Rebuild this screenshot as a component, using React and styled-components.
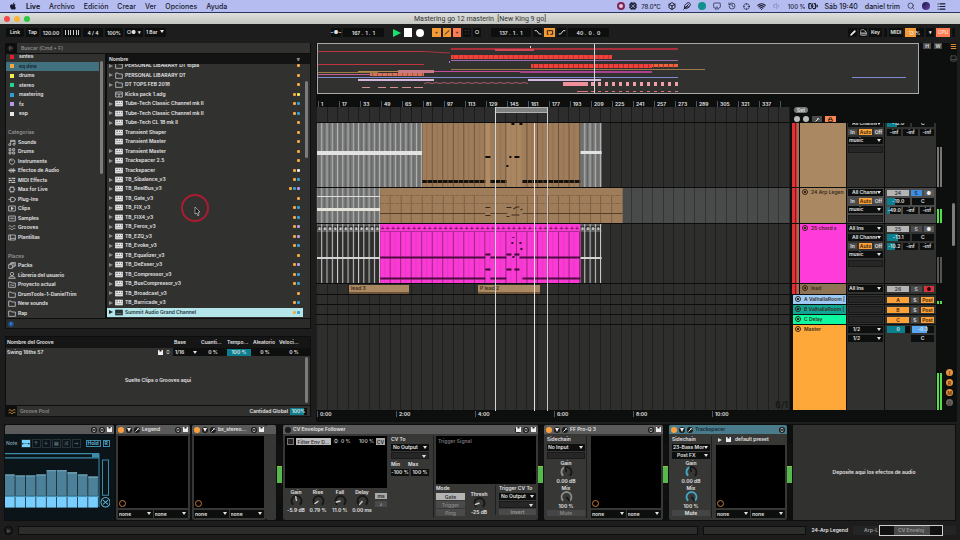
import React from 'react';
import styled, { createGlobalStyle, css } from 'styled-components';
import { FaApple } from 'react-icons/fa';
import {
  Wifi, Volume1, Search, Airplay, History, Box as Cube, List, Menu, Pencil, Piano, Lock,
  BatteryCharging, Cpu, Crosshair, Feather, PanelBottom,
} from 'lucide-react';

const c = {
  app: '#1d1d1d', black: '#0d0e0e', panel: '#313130', mid: '#3b3b3a', text: '#e4e4e4',
  orange: '#ffa13a', tan: '#a98862', magenta: '#ff3bd9', teal: '#0c7f8f', cyan: '#76d4ff',
};

const Global = createGlobalStyle`
  *, *::before, *::after { box-sizing: border-box; }
  body { margin: 0; background: ${c.app}; }
  body, button, input, select { font: 600 5px/7px Inter, "Liberation Sans", sans-serif; color: ${c.text}; }
  button, input, select { border: 0; border-radius: 0; padding: 0; margin: 0; min-width: 0; background: none; appearance: none; outline: 0; }
  ul { list-style: none; margin: 0; padding: 0; }
  svg { display: block; flex: none; }
`;

/* ---------- shell ---------- */
const App_ = styled.div`
  display: flex; flex-direction: column; height: 100vh; overflow: hidden; background: ${c.app};
`;
const MenuBar = styled.header`
  display: flex; align-items: center; justify-content: space-between; height: 13px; flex: none; padding: 0 14px 0 9px;
  background: #b5bdf0; border-bottom: 1px solid #27345f; color: #17192e;
`;
const MenuGroup = styled.nav`display: flex; align-items: center; gap: ${p => p.$gap}px;`;
const MenuItem = styled.button`
  font: ${p => (p.$bold ? 700 : 500)} ${p => (p.$small ? 6 : 7)}px/11px Inter, sans-serif; color: #17192e; white-space: nowrap;
`;
const Disc = styled.span`width: 8px; height: 8px; border-radius: 50%; background: ${p => p.$bg}; border: ${p => p.$ring || '0'};`;
const TitleBar = styled.div`
  display: grid; grid-template-columns: 1fr auto 1fr; align-items: center; height: 11px; flex: none; padding: 0 4px;
  background: linear-gradient(#dedfdc, #c4c6c2);
`;
const Title = styled.h1`margin: 0; font: 400 7px/10px Roboto, sans-serif; color: #333; white-space: pre;`;
const Lights = styled.div`display: flex; gap: 4px;`;
const Light = styled.button`width: 6px; height: 6px; border-radius: 50%; background: ${p => p.$bg};`;

/* ---------- transport ---------- */
const Transport = styled.div`
  display: grid; grid-template-columns: 326px 1fr auto; align-items: center; height: 19px; flex: none; padding: 0 5px 2px;
`;
const TGroup = styled.div`display: flex; align-items: center; gap: 2px; padding-left: ${p => p.$pad || 0}px;`;
const TBox = styled.button`
  display: flex; align-items: center; justify-content: center; height: 9px; width: ${p => p.$w}px;
  background: ${p => p.$bg || c.black}; color: ${p => p.$fg || c.text}; white-space: pre;
`;
const Field = styled.input`
  height: ${p => p.$h || 7}px; width: ${p => (p.$w ? p.$w + 'px' : '100%')}; text-align: center; line-height: 7px;
  background: ${p => (p.$fill ? `linear-gradient(90deg, ${p.$tone || c.teal} ${p.$fill}%, ${c.black} ${p.$fill}%)` : p.$bg || c.black)};
  color: ${p => p.$fg || c.text};
`;

/* ---------- drop-down ---------- */
const Drop = styled.span`
  display: flex; align-items: center; position: relative; height: ${p => p.$h || 7}px; width: ${p => (p.$w ? p.$w + 'px' : '100%')};
  background: ${p => (p.$empty ? '#262626' : c.black)}; border: ${p => (p.$empty ? '1px solid #1a1a1a' : '0')};
  &::after {
    content: ''; position: absolute; right: 2px; top: 2px; border: 2px solid transparent; border-top: 3px solid ${c.text}; border-bottom: 0;
    display: ${p => (p.$bare ? 'none' : 'block')};
  }
  select { width: 100%; height: 100%; padding: 0 6px 0 ${p => p.$pad || 1}px; line-height: 7px; }
`;
function Select({ value = '', label, ...rest }) {
  return <Drop {...rest}><select aria-label={label || value || 'Opciones'}><option>{value}</option></select></Drop>;
}

/* ---------- browser ---------- */
const Main = styled.main`display: flex; flex: 1; min-height: 0;`;
const Left = styled.aside`display: flex; flex-direction: column; gap: 7px; width: 311px; padding-left: 5px; flex: none;`;
const Browser = styled.section`
  position: relative; display: flex; flex-direction: column; height: 286px; background: ${c.black}; padding: 0 1px 1px;
`;
const SearchRow = styled.div`display: flex; gap: 2px; height: 10px; align-items: center; margin-bottom: 1px; flex: none;`;
const PlayDot = styled.button`
  width: 9px; height: 9px; border-radius: 50%; background: #1d1d1d; border: 1px solid #050505; display: grid; place-items: center;
`;
const SearchInput = styled.input`
  flex: 1; height: 10px; background: ${c.panel}; padding-left: 4px;
  &::placeholder { color: #8c8c8c; opacity: 1; }
`;
const BrowserBody = styled.div`display: flex; gap: 2px; flex: 1; min-height: 0;`;
const Side = styled.div`width: 99px; background: ${c.panel}; overflow: hidden; position: relative;`;
const SideList = styled.ul`display: grid; grid-auto-rows: 1fr; height: 266px; margin-top: -2px; width: 93px;`;
const SideItem = styled.li`
  display: flex; background: ${p => (p.$on ? '#41717f' : 'none')};
  button { display: flex; align-items: center; gap: 2px; padding-left: 2px; width: 100%; color: ${p => (p.$on ? '#10242c' : p.$head ? '#969696' : c.text)}; white-space: nowrap; }
`;
const Swatch = styled.span`width: 4px; height: 4px; margin: 0 3px 0 2px; background: ${p => p.$bg};`;
const Thumb = styled.span`
  position: absolute; right: 2px; top: ${p => p.$top}px; height: ${p => p.$h}px; width: 3px; background: #7c7c7c; border-radius: 2px;
`;
const Files = styled.div`flex: 1; display: flex; flex-direction: column; background: ${c.panel}; position: relative; min-width: 0;`;
const FilesHead = styled.div`
  display: flex; justify-content: space-between; align-items: center; height: 10px; flex: none; z-index: 1;
  background: #131313; padding: 0 10px 0 2px; position: relative;
`;
const FileList = styled.ul`display: grid; grid-auto-rows: 1fr; height: 256px; margin-top: -3px; padding-right: 7px;`;
const FileItem = styled.li`
  background: ${p => (p.$on ? '#b3e5e9' : 'none')}; display: flex;
  button { display: flex; align-items: center; width: 100%; padding: 0 3px 0 2px; gap: 2px; color: ${p => (p.$on ? '#243438' : c.text)}; white-space: nowrap; }
`;
const Name = styled.span`flex: 1; text-align: left; white-space: nowrap;`;
const Dot = styled.span`width: 3px; height: 3px; border-radius: 1px; background: ${p => p.$bg};`;
const Dots = styled.span`display: flex; gap: 1px;`;
const BrowserFoot = styled.div`height: 9px; margin-top: 1px; flex: none; background: #2b2b2a; display: flex; align-items: center; padding-left: 2px;`;
const Pointer = styled.div`position: absolute; left: 176px; top: 151px; pointer-events: none;`;

/* ---------- groove pool ---------- */
const Groove = styled.section`height: 81px; background: ${c.panel}; border: 1px solid ${c.black}; display: flex; flex-direction: column;`;
const GrooveTable = styled.table`
  width: 100%; border-collapse: collapse; table-layout: fixed; background: #262626;
  th { font-weight: 600; text-align: left; height: 11px; padding: 0 0 0 1px; background: #151515; white-space: nowrap; }
  td { height: 8px; padding: 0 1px; background: ${c.black}; text-align: center; }
  td:first-child { background: ${c.panel}; }
`;
const GrooveName = styled.div`display: flex; align-items: center; gap: 3px; padding-right: 2px;`;
const GrooveDrop = styled.div`flex: 1; display: grid; place-items: center; position: relative;`;
const GrooveFoot = styled.div`
  height: 11px; border-top: 1px solid ${c.black}; display: flex; align-items: center; gap: 2px; padding-right: 3px; 
  h2 { flex: 1; margin: 0; font: inherit; color: #8c8c8c; }
`;
const GrooveTab = styled.button`width: 11px; height: 10px; background: ${c.black}; display: grid; place-items: center; margin-right: 1px;`;

/* ---------- arrangement ---------- */
const Arrange = styled.section`
  flex: 1; min-width: 0; margin: 0 3px 0 5px; background: ${c.black}; display: flex; flex-direction: column; position: relative;
`;
const OverviewRow = styled.div`display: flex; gap: 4px; height: 51px; padding-left: 1px; flex: none;`;
const Overview = styled.div`flex: 1; border: 1px solid #a9a9a9; background: ${c.panel}; svg { width: 100%; height: 100%; }`;
const TopTools = styled.div`display: flex; gap: 3px; width: 34px; align-items: flex-start;`;
const ViewToggles = styled.div`display: grid; gap: 5px; margin-left: auto;`;
const Mini = styled.button`
  height: ${p => p.$h || 6}px; width: ${p => (p.$w ? p.$w + 'px' : 'auto')}; flex: ${p => (p.$w ? 'none' : 1)}; border-radius: ${p => p.$r || 0}px;
  background: ${p => p.$bg || '#4a4a4a'}; color: ${p => p.$fg || c.text}; display: flex; align-items: center; justify-content: center;
  white-space: nowrap; line-height: 6px; border: ${p => p.$line || '0'};
`;
const Body = styled.div`display: flex; flex: 1; min-height: 0;`;
const Timeline = styled.div`flex: 1; min-width: 0; display: flex; flex-direction: column; position: relative;`;
const Ruler = styled.div`
  display: flex; height: ${p => p.$h}px; padding-left: ${p => p.$pad}px; overflow: hidden; align-items: ${p => p.$at || 'flex-end'}; flex: none;
  span { border-left: 1px solid #555; padding-left: 2px; height: 6px; line-height: 6px; white-space: nowrap; flex: 0 0 ${p => p.$step}px; }
`;
const grid = (a, b) => css`
  background: repeating-linear-gradient(90deg, ${a} 0 1px, ${b} 1px 11px, ${a} 11px 12px, ${b} 12px 21px);
`;
const Scrub = styled.div`height: 14px; flex: none; ${grid('#1c1c1c', '#2c2d2c')} position: relative;`;
const Loop = styled.div`
  position: absolute; left: 179px; width: 53px; top: 0; height: 6px; background: #7f8080; border: 1px solid #b0b0b0;
`;
const Lane = styled.div`
  height: ${p => (p.$h ? p.$h + 'px' : 'auto')}; flex: ${p => (p.$h ? 'none' : 1)}; border-bottom: 1px solid #0c0c0c; position: relative;
  ${p => (p.$on ? grid('#343434', '#494a4a') : grid('#1f1f1f', '#2e2f2d'))}
  svg { width: 100%; height: 100%; }
`;
const Clip = styled.div`
  position: absolute; top: 1px; bottom: 0; left: ${p => p.$l}px; width: ${p => p.$w}px; background: ${c.tan}; color: #3d2d1b;
  padding-left: 2px; border-bottom: 2px solid #6e5538;
`;
const Line = styled.i`position: absolute; left: ${p => p.$l}px; top: ${p => p.$t || 0}px; bottom: ${p => p.$b || 0}px; width: 1px; background: ${p => p.$c};`;
const Zoom = styled.span`position: absolute; right: 2px; bottom: 0; font-size: 9px; line-height: 10px; font-weight: 500; color: #131313;`;
const Controls = styled.div`width: 152px; flex: none; padding: 0 0 11px 2px; display: flex; flex-direction: column;`;
const SetBox = styled.div`height: 29px; padding: 13px 0 0 2px; display: grid; grid-template-rows: 6px 6px; gap: 3px; flex: none;`;
const SetRow = styled.div`display: flex; gap: 3px; align-items: center;`;
const TrackRow = styled.div`
  display: flex; height: ${p => (p.$h ? p.$h + 'px' : 'auto')}; flex: ${p => (p.$h ? 'none' : 1)}; border-bottom: 1px solid ${c.black}; overflow: hidden;
  background: ${p => (p.$on ? '#4a4a4a' : c.panel)};
`;
const GroupBar = styled.div`width: 7px; flex: none; background: linear-gradient(90deg, #e03036 0 3px, #8e1418 3px 4px, #e03036 4px 5px, #97705a 5px);`;
const Head = styled.div`
  flex: 1; min-width: 0; display: flex; gap: 3px; padding: 1px 0 0 2px; background: ${p => p.$bg}; color: #3a2b1c; white-space: nowrap; overflow: hidden;
  border-left: 1px solid ${c.black};
`;
const Fold = styled.button`width: 6px; height: 6px; border-radius: 50%; border: 1px solid #33261a; display: grid; place-items: center; flex: none;
  &::after { content: ''; width: 2px; height: 2px; background: #33261a; }
`;
const IO = styled.div`
  width: 38px; flex: none; padding: 1px 1px 0; border-left: 1px solid ${c.black}; display: grid; align-content: start; gap: 2px;
  margin-top: ${p => -(p.$up || 0)}px;
`;
const Mix = styled(IO)`width: 52px; padding: 1px 2px 0; grid-auto-rows: 7px;`;
const MixRow = styled.div`display: flex; gap: 2px; align-items: center;`;
const Meter = styled.div`
  width: 6px; flex: none; border-left: 1px solid ${c.black}; position: relative;
  background: linear-gradient(0deg, ${p => p.$tone || '#55e04a'} ${p => p.$v || 0}px, #0d0e0e ${p => p.$v || 0}px);
  &::after { content: ''; position: absolute; left: 2px; top: 0; bottom: 0; width: 1px; background: ${c.black}; }
`;
const RightRail = styled.div`width: 15px; flex: none; position: relative; display: flex; flex-direction: column; justify-content: flex-end; align-items: center; gap: 3px; padding-bottom: 16px;`;
const RailDot = styled.button`width: 7px; height: 7px; border-radius: 50%; background: ${p => p.$bg}; color: #573611; line-height: 6px; text-align: center;`;

/* ---------- devices ---------- */
const Devices = styled.section`
  display: flex; height: 97px; flex: none; margin: 2px 4px 0; padding: 1px; background: ${c.black}; 
`;
const Device = styled.article`
  width: ${p => p.$w}px; margin-right: ${p => p.$gap || 0}px; flex: none; display: flex; flex-direction: column; background: #373736; border-radius: 2px; overflow: hidden;
`;
const DeviceHead = styled.header`
  height: 9px; display: flex; align-items: center; gap: 2px; padding: 0 2px; background: ${p => (p.$on ? '#497b8b' : '#5a5a5a')}; color: ${p => (p.$on ? '#112a33' : c.text)};
  h3 { font: inherit; margin: 0; flex: 1; white-space: nowrap; }
`;
const Round = styled.button`width: 6px; height: 6px; border-radius: 50%; background: ${p => p.$bg || '#1b1b1b'}; display: grid; place-items: center; flex: none;`;
const DeviceBody = styled.div`flex: 1; display: flex; min-height: 0; padding: 2px;`;
const Pad = styled.div`flex: 1; background: #000; display: flex; align-items: flex-end; padding: 1px;`;
const Ring = styled.span`width: 7px; height: 7px; border-radius: 50%; border: 1px solid #c97a38;`;
const Column = styled.div`
  display: flex; flex-direction: column; gap: ${p => (p.$gap ?? 1)}px; width: ${p => (p.$w ? p.$w + 'px' : 'auto')}; flex: ${p => (p.$w ? 'none' : 1)}; min-width: 0;
  padding: ${p => p.$p || '0'}; border-left: ${p => (p.$rule ? '1px solid #1f1f1f' : '0')};
`;
const Row = styled.div`display: flex; gap: ${p => (p.$gap ?? 1)}px; align-items: ${p => p.$a || 'center'}; justify-content: ${p => p.$j || 'flex-start'}; padding: ${p => p.$p || '0'};`;
const KnobLabel = styled.label`
  display: flex; flex-direction: column; align-items: center; position: relative; width: ${p => p.$w || 22}px; line-height: 6px; white-space: nowrap;
  input { position: absolute; inset: 6px 0; width: 100%; opacity: 0; }
`;
const Display = styled.div`background: #000; height: ${p => p.$h}px; padding: 2px; color: ${p => p.$fg || '#bbb'}; display: flex; align-items: flex-start; gap: 2px; flex: none; white-space: nowrap;`;
const Spacer = styled.span`flex: 1;`;
const LevelBar = styled.div`
  width: 5px; margin: 0 1px 0 0; flex: none; align-self: center; height: 57px; background: linear-gradient(0deg, #101010 18px, #56b94c 18px 34px, #8fbf4a 34px 35px, #101010 35px);
`;
const ArpPanel = styled.div`flex: 1; background: #0a1419; padding: 5px 4px 6px 0; display: flex; flex-direction: column; gap: 4px; color: #7d9aa6; svg { width: 100%; flex: 1; }`;
const ArpButton = styled.button`height: ${p => p.$h || 9}px; width: ${p => p.$w}px; background: ${p => (p.$on ? c.cyan : 'none')}; border: 1px solid ${p => (p.$hi ? '#3e8aa9' : '#263439')};
  color: ${p => (p.$on ? '#0a1419' : p.$hi ? '#6cc0e0' : '#5d6f77')}; line-height: 5px;`;
const DropZone = styled.div`flex: 1; background: #313130; display: grid; place-items: center; text-align: center;`;

const Status = styled.footer`display: flex; align-items: center; gap: 5px; height: 19px; flex: none; padding: 0 4px; white-space: nowrap;`;
const StatusBar = styled.div`flex: ${p => p.$f}; height: 9px; background: #2d2d2c; border: 1px solid #0d0d0d;`;
const MiniMap = styled.div`width: 103px; height: 9px; background: #242424; display: flex; align-items: center; justify-content: flex-end; gap: 1px; color: #999; flex: none;`;
const MapView = styled.div`width: 64px; height: 11px; border: 1px solid #d0d0d0; display: grid; place-items: center; margin-right: 13px; flex: none; background: linear-gradient(90deg, #111 14px, #4a4a4a 14px 50px, #111 50px);`;

/* ---------- icons ---------- */
const Svg = ({ w = 8, h = 7, v = '0 0 24 21', children, color = 'currentColor', sw = 2 }) => (
  <svg width={w} height={h} viewBox={v} fill="none" stroke={color} strokeWidth={sw} aria-hidden="true">{children}</svg>
);
const paths = {
  sounds: <><path d="M8 17V4h13v11M8 7h13" /><circle cx="5" cy="17" r="3" /><circle cx="18" cy="16" r="3" /></>,
  drums: <><path d="M3 2h6v6H3zM14 2h6v6h-6zM3 12h6v6H3zM14 12h6v6h-6z" /></>,
  instruments: <path d="M8 4a8 8 0 1 0 8 0M12 1v9M6 2v4h4" />,
  audio: <path d="M1 10h22M5 7v7M9 3v15M13 6v9M17 3v14M20 8v5" />,
  midi: <path d="M2 4h6M11 4h11M2 10h11M16 10h5M2 16h5M10 16h12" strokeWidth="3" />,
  max: <path d="M6 4h12v13H6zM2 10h4M18 10h4M9 1v3M15 1v3M9 17v3M15 17v3" />,
  plug: <path d="M8 4h7a6 6 0 0 1 0 13H8zM1 10h7M21 10h3" />,
  clips: <><path d="M2 3h20v15H2z" /><path d="M10 7l6 3-6 4z" fill="currentColor" /></>,
  samples: <path d="M2 3h20v15H2zM5 10h2M9 7v6M12 9v3M15 7v6M18 10h2" />,
  grooves: <path d="M2 7c5-6 8 5 12 1s5-3 8-2M2 15c5-6 8 5 12 1s5-3 8-2" />,
  templates: <path d="M2 3h20v15H2zM7 3v15M7 13h15" />,
  packs: <path d="M2 8h11v11H2zM6 8V4h12v11h-5M10 4V1h12v11h-4" />,
  user: <><circle cx="12" cy="6" r="5" /><path d="M2 19c0-7 20-7 20 0z" /></>,
  project: <path d="M2 19V3h7l2 3h11v13zM6 13c4-5 6 4 12-1" />,
  folder: <path d="M2 19V3h7l2 3h11v13z" />,
  device: <><path d="M1 3h22v15H1z" fill="currentColor" /><path d="M4 7h5M12 7h3M18 7h3" stroke="#333" /><path d="M4 14h16" stroke="#888" /></>,
  pack: <path d="M2 3h20v15H2zM2 9h20M12 9v9" />,
};
const Ico = ({ n }) => <Svg>{paths[n]}</Svg>;
const Tri = ({ color = '#8d8d8d', s = 4 }) => <svg width={s} height={s} viewBox="0 0 4 4" aria-hidden="true"><path d="M0 0l4 2-4 2z" fill={color} /></svg>;
const Down = () => <svg width="4" height="4" viewBox="0 0 4 4" aria-hidden="true"><path d="M0 0h4L2 4z" fill="#eee" /></svg>;
const Save = ({ color = '#eee' }) => <svg width="5" height="5" viewBox="0 0 10 10" aria-hidden="true"><path d="M0 0h10v10H0z" fill={color} /><path d="M3 0h4v3H3z" fill="#222" /></svg>;
const Swap = () => <svg width="4" height="4" viewBox="0 0 10 10" fill="none" stroke="#ddd" strokeWidth="2" aria-hidden="true"><path d="M2 6a3 3 0 0 0 6 0M8 4a3 3 0 0 0-6 0" /></svg>;
const Wrench = () => <svg width="5" height="5" viewBox="0 0 10 10" fill="none" stroke="#eee" strokeWidth="2" aria-hidden="true"><path d="M1 9l6-6M5 2l3 3" /></svg>;

/* ---------- data ---------- */
const O = '#f5a742', B = '#2f9fd8', V = '#b59ae8', Y = '#f2ea5c', W = '#e8e8e8';
const side = [
  { t: 'sintes', s: '#e0202f' }, { t: 'eq dina', s: '#f5a742', on: true }, { t: 'drums', s: '#f7ee57' }, { t: 'stereo', s: '#21d68c' },
  { t: 'mastering', s: B }, { t: 'fx', s: V }, { t: 'esp', s: W }, null, { t: 'Categorías', head: true },
  { t: 'Sounds', i: 'sounds' }, { t: 'Drums', i: 'drums' }, { t: 'Instruments', i: 'instruments' }, { t: 'Efectos de Audio', i: 'audio' },
  { t: 'MIDI Effects', i: 'midi' }, { t: 'Max for Live', i: 'max' }, { t: 'Plug-Ins', i: 'plug' }, { t: 'Clips', i: 'clips' },
  { t: 'Samples', i: 'samples' }, { t: 'Grooves', i: 'grooves' }, { t: 'Plantillas', i: 'templates' }, null, { t: 'Places', head: true },
  { t: 'Packs', i: 'packs' }, { t: 'Librería del usuario', i: 'user' }, { t: 'Proyecto actual', i: 'project' },
  { t: 'DrumTools-1-DanielTrim', i: 'folder' }, { t: 'New sounds', i: 'folder' }, { t: 'Rap', i: 'folder' },
];
const files = [
  ['PERSONAL LIBARARY DT topia', [O], 'folder', 1], ['PERSONAL LIBARARY DT', [O], 'folder', 1], ['DT TOPS FEB 2018', [O], 'folder', 1],
  ['Kicks pack 1.adg', [O, Y], 'pack', 0], ['Tube-Tech Classic Channel mk II', [O, B], 'device', 1], ['Tube-Tech Classic Channel mk II', [O, B], 'device', 1],
  ['Tube-Tech CL 1B mk II', [O], 'device', 1], ['Transient Shaper', [O], 'device', 0], ['Transient Master', [O], 'device', 0],
  ['Transient Master', [O], 'device', 1], ['Trackspacer 2.5', [O], 'device', 1], ['Trackspacer', [O, W], 'device', 0],
  ['TB_Sibalance_v3', [O, B], 'device', 1], ['TB_ReelBus_v3', [O, B, V], 'device', 1], ['TB_Gate_v3', [O], 'device', 1], ['TB_FIX_v3', [O, B], 'device', 1],
  ['TB_FIX4_v3', [O, B], 'device', 1], ['TB_Ferox_v3', [O, V], 'device', 1], ['TB_EZQ_v3', [O, V], 'device', 1], ['TB_Evoke_v3', [O, B], 'device', 1],
  ['TB_Equalizer_v3', [O], 'device', 1], ['TB_DeEsser_v3', [O, V], 'device', 1], ['TB_Compressor_v3', [O, B], 'device', 1],
  ['TB_BusCompressor_v3', [O, B], 'device', 1], ['TB_Broadcast_v3', [O], 'device', 1], ['TB_Barricade_v3', [O, B], 'device', 1],
  ['Summit Audio Grand Channel', [O, B], 'device', 1],
];
const range = n => Array.from({ length: n }, (_, i) => i);

/* ---------- drawings ---------- */
function OverviewMap() {
  const R = (x, y, w, h, f, o) => <rect key={`${x}-${y}-${w}`} x={x - 318} y={y - 44} width={w} height={h} fill={f} opacity={o} />;
  return (
    <svg viewBox="0 0 600 49" preserveAspectRatio="none" aria-label="Vista general">
      {R(318, 51, 106, 1, '#b83440')}
      <path d="M106 7.5l26 1.5" stroke="#a83440" fill="none" />
      {R(451, 48, 227, 2, '#a92f3c')}{R(495, 49, 39, 2, '#d04a55')}
      {R(451, 55, 161, 4, '#f0403a')}{R(451, 60, 227, 1, '#9a6bb0')}
      {range(32).map(i => R(453 + i * 5, 55, 1, 4, '#c83230'))}
      {R(318, 64, 106, 1, '#c0343f')}{R(531, 64, 121, 4, '#f0403a')}{R(652, 64, 26, 3, '#e8663a')}
      {range(29).map(i => R(533 + i * 5, 64, 1, 4, '#a82f2c'))}
      {R(451, 69, 254, 1, '#9a7a4c')}{R(398, 70, 36, 3, '#c77a86')}{R(434, 71, 218, 1, '#c84a9e')}
      {R(318, 72, 60, 1, '#9a8040')}{R(318, 74, 52, 1, '#c85a9a')}{R(358, 71, 42, 1, '#b08a50')}{R(370, 73, 54, 3, '#d8705a')}
      {range(11).map(i => R(372 + i * 5, 73, 1, 3, '#8e5a4a'))}
      {R(520, 71, 132, 2, '#a8428e')}{R(318, 77, 360, 1, '#7f8ad0')}{R(852, 77, 54, 1, '#7f8ad0')}
      {R(358, 79, 76, 2, '#d5b8e0')}{R(528, 79, 73, 2, '#d5b8e0')}
      <path d={'M106 39.5' + range(26).map(i => `l4 ${i % 2 ? 1 : -1}`).join('')} stroke="#a85a68" fill="none" />
      {R(563, 82, 25, 4, '#f0909c')}{range(13).map(i => R(591 + i * 7, 82, 3, 4, '#f0a0a8'))}
      {[[362, 8], [378, 8], [390, 8], [402, 9], [414, 9]].map(([x, w]) => R(x, 87, w, 1, '#d89098'))}
      {R(577, 91, 11, 1, '#e07080')}{range(13).map(i => R(591 + i * 7, 91, 3, 1, '#e07080'))}
      {R(530, 46, 1, 2, '#cfe3e6')}{R(449, 61, 1, 2, '#c070d0')}
      {R(594, 44, 1, 49, '#d8d8d8')}
    </svg>
  );
}
const V0 = 317;
const Rect = ({ x, y, w, h, f, o }) => <rect x={x - V0} y={y} width={w} height={h} fill={f} opacity={o} />;
function Defs({ id }) {
  return (
    <defs>
      <pattern id={`${id}g`} width="5.25" height="70" patternUnits="userSpaceOnUse"><rect width="5.25" height="70" fill="#777878" /><path d="M.5 0v70" stroke="#b4b4b4" /><path d="M3 0v70" stroke="#646464" /></pattern>
      <pattern id={`${id}t`} width="10.5" height="70" patternUnits="userSpaceOnUse"><rect width="10.5" height="70" fill="#a07d5a" /><path d="M.5 0v70" stroke="#6b543b" /><path d="M5.5 0v70" stroke="#8f6f4f" /></pattern>
      <pattern id={`${id}m`} width="10.5" height="70" patternUnits="userSpaceOnUse"><rect width="10.5" height="70" fill="#fb3ad5" /><path d="M.5 7v63" stroke="#96247f" /><path d="M5.5 7v63" stroke="#e636c3" /><path d="M0 7.5h10.5" stroke="#b02a95" /><path d="M2 4.5h3M3.5 2.5v3M7 4.5h3M8.5 2.5v3" stroke="#7a1c68" /></pattern>
      <pattern id={`${id}w`} width="5.25" height="70" patternUnits="userSpaceOnUse"><path d="M.5 0v70" stroke="#cfcfcf" /><path d="M0 1h5.25M0 7h5.25" stroke="#bbb" strokeWidth=".6" /><path d="M2 5h3M3.5 3v3" stroke="#eee" /></pattern>
    </defs>
  );
}
function LaneA() {
  return (
    <svg viewBox="0 0 473 64" preserveAspectRatio="none" aria-hidden="true"><Defs id="a" />
      <Rect x={318} y={0} w={105} h={64} f="url(#ag)" /><Rect x={318} y={28} w={105} h={4} f="#e2e2e2" />
      <Rect x={423} y={0} w={158} h={64} f="url(#at)" /><Rect x={486} y={0} w={5} h={64} f="#b08c66" /><Rect x={507} y={0} w={16} h={64} f="#b08c66" o=".6" />
      <path d="M106 58.5h63M174 58.5h16M206 58.5h58" stroke="#17110b" strokeWidth="3" strokeDasharray="4.6 .6" />
      {[[486, 33, 5], [510, 33, 2], [515, 33, 5], [507, 42, 2], [512, 0, 3], [520, 0, 3]].map(([x, y, w]) => <Rect key={x + '-' + y} x={x} y={y} w={w} h={2} f="#100c08" />)}
      <Rect x={581} y={0} w={21} h={64} f="url(#ag)" /><Rect x={581} y={28} w={21} h={3} f="#e2e2e2" />
    </svg>
  );
}
function LaneB() {
  return (
    <svg viewBox="0 0 473 35" preserveAspectRatio="none" aria-hidden="true"><Defs id="b" />
      <Rect x={318} y={0} w={63} h={35} f="url(#bg)" /><Rect x={318} y={8} w={63} h={1} f="#ddd" /><Rect x={318} y={20} w={63} h={3} f="#e6e3dc" />
      <Rect x={381} y={0} w={242} h={35} f="#a07d5a" />
      <path d="M74 7v28M85 7v28M95 7v28M106 7v28M116 7v28M127 7v28M137 7v28M148 7v28M158 7v28M200 7v28M211 7v28M221 7v28M232 7v28M242 7v28M253 7v28M263 7v28M274 7v28M284 7v28M295 7v28" stroke="#7d6144" />
      <path d="M64 7.5h242M64 15.5h242" stroke="#866748" strokeDasharray="4 1" /><path d="M64 25.5h105M174 25.5h17M206 25.5h100" stroke="#553f29" />
      <path d="M169 19.5h5M169 27.5h5M190 19.5h5M197 21l3-2h3M190 28.5h3M195 27h8M204 22l2-1" stroke="#3a2a1a" fill="none" />
    </svg>
  );
}
function LaneC() {
  return (
    <svg viewBox="0 0 473 59" preserveAspectRatio="none" aria-hidden="true"><Defs id="c" />
      <Rect x={318} y={0} w={63} h={59} f="url(#cw)" /><Rect x={318} y={33} w={63} h={2} f="#d4d4d4" />
      <Rect x={381} y={0} w={200} h={59} f="url(#cm)" />
      <path d="M64 33.5h105M174 33.5h16M203 33.5h61M64 54.5h105M174 54.5h16M206 54.5h58" stroke="#4d0d40" strokeWidth="2" />
      <path d="M169 30.5h5M190 30.5h5M198 30.5h5M169 45.5h5M190 45.5h5M198 45.5h5" stroke="#3a0a30" strokeWidth="2" />
      <path d="M197 13v1M196 18v2M204 18v2M205 24v2M197 32v2" stroke="#3a0a30" strokeWidth="2" />
      <Rect x={581} y={0} w={21} h={59} f="url(#cw)" /><Rect x={581} y={33} w={21} h={2} f="#d4d4d4" />
    </svg>
  );
}

/* ---------- tracks ---------- */
const InAutoOff = () => <MixRow><Mini>In</Mini><Mini $bg={c.orange} $fg="#3c2508" $w={13}>Auto</Mini><Mini>Off</Mini></MixRow>;
const Inf = ({ first = '-inf', fill }) => (
  <MixRow><Field aria-label="Envío A" defaultValue={first} $fill={fill} /><Field aria-label="Envío B" defaultValue="-inf" /><Field aria-label="Envío C" defaultValue="-inf" /></MixRow>
);
const NumRow = ({ n, solo, arm }) => (
  <MixRow><Mini $w={22} $bg="#b4b4b4" $fg="#333">{n}</Mini><Mini $bg={solo ? '#3f8fe0' : '#4a4a4a'} $fg={solo ? '#0d2c4d' : '#ccc'}>S</Mini>
    <Mini $bg={arm ? '#d8343e' : '#5a5a5a'} $fg={arm ? '#2a0508' : '#eee'}>●</Mini></MixRow>
);
const VolPan = ({ v, fill, tone }) => <MixRow><Field aria-label="Volumen" defaultValue={v} $fill={fill} $tone={tone} /><Field aria-label="Panorama" defaultValue="C" /></MixRow>;
const Return = ({ k }) => (
  <MixRow><Mini $w={22} $bg={c.orange} $fg="#3c2508">{k}</Mini><Mini $w={8}>S</Mini><Mini $bg={c.orange} $fg="#3c2508">Post</Mini></MixRow>
);
const Track = ({ h, on, bg, name, group, io, mix, meter, tone, up }) => (
  <TrackRow $h={h} $on={on}>
    {group && <GroupBar />}
    <Head $bg={bg}>{name && <><Fold aria-label={`Plegar ${name}`} />{name}</>}</Head>
    <IO $up={up}>{io}</IO><Mix $up={up}>{mix}</Mix><Meter $v={meter} $tone={tone} />
  </TrackRow>
);
const IOFull = ({ ins }) => (
  <>{ins && <Select value="All Ins" />}<Select value="All Channels" $pad={4} /><InAutoOff /><Select value="music" /><Select label="Canal de salida" $empty $bare /></>
);

/* ---------- devices ---------- */
function Knob({ label, value, deg = 0, tone = '#8a8a8a', w, full }) {
  const r = 5, pt = a => [8 + r * Math.sin((a * Math.PI) / 180), 7 - r * Math.cos((a * Math.PI) / 180)];
  const arc = (a, b) => { const [x1, y1] = pt(a), [x2, y2] = pt(b); return `M${x1} ${y1}A${r} ${r} 0 ${b - a > 180 ? 1 : 0} 1 ${x2} ${y2}`; };
  const [nx, ny] = pt(deg);
  return (
    <KnobLabel $w={w}>{label}
      <svg width="15" height="12" viewBox="1 1 14 12" fill="none" aria-hidden="true">
        <path d={arc(-140, 140)} stroke="#181818" strokeWidth="2" />
        {full && <path d={arc(-140, full)} stroke={tone} strokeWidth="2" />}
        <path d={`M8 7L${nx} ${ny}`} stroke={full ? '#111' : '#ccc'} strokeWidth="1.4" />
      </svg>
      <input type="range" min="-140" max="140" defaultValue={deg} />{value}
    </KnobLabel>
  );
}
const PadDevice = ({ children }) => (
  <Column $gap={2}>{children}<Pad><Ring /></Pad><Row><Select value="none" $h={8} /><Select value="none" $h={8} /></Row></Column>
);
const PlugHead = ({ name, on, noSave }) => (
  <DeviceHead $on={on}><Round $bg={c.orange} aria-label="Activar" /><Round aria-label="Desplegar"><Down /></Round><Round aria-label="Editar"><Wrench /></Round><h3>{name}</h3>
    <Round aria-label="Intercambiar"><Swap /></Round>{!noSave && <Save />}</DeviceHead>
);
const Sidechain = ({ input, second, tone, mute, gainFull }) => (
  <Column $w={40} $gap={1} $p="0 1px">Sidechain<Select value={input} />
    <Select value={second} label="Toma" $empty={!second} $bare={!second} $pad={second ? 5 : 1} />
    <Row $j="center"><Knob label="Gain" value="0.00 dB" deg={-20} full={gainFull} tone={tone} /></Row>
    <Row $j="center"><Knob label="Mix" value="100 %" deg={140} full={140} tone={tone} /></Row>
    <Row><Mini $fg={mute ? c.text : '#888'} $bg="#454545">Mute</Mini></Row>
  </Column>
);

function Arp() {
  const tops = [21, 22, 22, 21, 17, 17, 19, 21, 23];
  return (
    <Device $w={109} $gap={2}>
      <DeviceHead><h3 /><Round aria-label="Mapa"><Swap /></Round><Round aria-label="Intercambiar"><Swap /></Round><Save /></DeviceHead>
      <ArpPanel>
        <Row $gap={2} $p="0 0 0 1px">Note
          <Row $p="0 0 0 1px"><ArpButton $w={10} $on>•─•</ArpButton><ArpButton $w={9}>↑</ArpButton><ArpButton $w={9}>↓</ArpButton><ArpButton $w={9}>▤</ArpButton><ArpButton $w={9}>⤨</ArpButton><ArpButton $w={9}>⇢</ArpButton></Row>
          <Row $gap={2} $p="0 0 0 3px"><ArpButton $w={15} $h={7} $hi>Hold</ArpButton><ArpButton $w={7} $h={7} $hi>R</ArpButton></Row>
        </Row>
        <svg viewBox="0 0 105 58" preserveAspectRatio="none" aria-hidden="true">
          <path d="M0 1.5h94M0 5.5h94M94 1.5v50M0 41.5h94" stroke="#3e8aa9" /><path d="M87 1h7v4h-7z" fill="#3e8aa9" />
          {tops.map((t, i) => <g key={i}><rect x={i ? i * 10.4 : 0} y={t} width="9.7" height={41 - t} fill="#4c8199" /><path d={`M${i * 10.4} ${t + 0.5}h9.7`} stroke="#79aabd" /><rect x={i * 10.4} y="42" width="9.7" height="10" fill="#78ceff" /></g>)}
          <path d="M97.500 7.5h6v33h-6z" fill="none" stroke="#3e8aa9" /><circle cx="100.500" cy="47" r="4.500" fill="none" stroke="#5fb4d4" /><path d="M98 45l5 4M98 49l5-4" stroke="#5fb4d4" />
        </svg>
      </ArpPanel>
    </Device>
  );
}
function Envelope() {
  return (
    <Device $w={255}>
      <DeviceHead><Round aria-label="Activar" /><h3>CV Envelope Follower</h3><Round aria-label="Mapa"><Save /></Round><Round aria-label="Intercambiar"><Swap /></Round><Save /></DeviceHead>
      <DeviceBody>
        <Column $w={102}>
          <Display $h={52}><Mini $w={7} $h={7} $bg="#222" $line="1px solid #777" aria-label="Mapear" /><Mini $w={35} $h={7} $bg="#bdbdbd" $fg="#333">Filter Env D...</Mini>
            <Round aria-label="Quitar"><Swap /></Round><span>0 %</span><Spacer /><span>100 %</span><Mini $w={9} $h={7} $bg="#aaa" $fg="#222">CV</Mini></Display>
          <Row $gap={0} $a="flex-end">
            <Knob label="Gain" value="-5.9 dB" deg={-10} /><Knob label="Rise" value="0.79 %" deg={-125} /><Knob label="Fall" value="11.0 %" deg={-105} /><Knob label="Delay" value="0.00 ms" deg={-140} />
            <Column $gap={2} $p="0 0 6px 2px"><Row><Mini $bg="#aaa" $fg="#222">ms</Mini></Row><Row><Mini>♪</Mini></Row></Column>
          </Row>
        </Column>
        <Column $w={46} $p="0 4px" $gap={1}>CV To<Select value="No Output" $pad={2} /><Select label="Canal CV" $empty />
          <Row $gap={8} $p="1px 0 0">Min<span>Max</span></Row><Row $gap={2}><Field aria-label="Min" defaultValue="-100 %" /><Field aria-label="Max" defaultValue="100 %" /></Row></Column>
        <Column $p="0 0 0 2px" $rule>
          <Display $h={48} $fg="#777">Trigger Signal</Display>
          <Row $gap={0} $a="flex-start">
            <Column $w={31} $p="0 2px 0 0">Mode<Row><Mini $h={7} $bg="#b4b4b4" $fg="#333">Gate</Mini></Row><Row><Mini $h={7} $fg="#888">Trigger</Mini></Row><Row><Mini $h={7} $fg="#888">Ping</Mini></Row></Column>
            <Row $p="6px 5px 0 1px"><Knob label="Thresh" value="-25 dB" deg={-110} /></Row>
            <Column $p="0 0 0 3px" $rule>Trigger CV To<Select value="No Output" $pad={2} /><Select label="Canal Trigger" $empty /><Row><Mini $fg="#999">Insert</Mini></Row></Column>
          </Row>
        </Column>
      </DeviceBody>
    </Device>
  );
}

const Time = ({ items }) => items.map((t, i) => <span key={i}>{t}</span>);

export default function App() {
  return (
    <App_>
      <Global />
      <MenuBar>
        <MenuGroup $gap={9}><FaApple size={8} />{['Live', 'Archivo', 'Edición', 'Crear', 'Ver', 'Opciones', 'Ayuda'].map((m, i) => <MenuItem key={m} $bold={!i}>{m}</MenuItem>)}</MenuGroup>
        <MenuGroup $gap={7}>
          <MenuGroup $gap={4}><Disc $bg="#e9c7de" $ring="2px solid #7c2550" /><Cpu size={8} strokeWidth={3} /><MenuItem $small>78.0°C</MenuItem></MenuGroup>
          <Cube size={8} strokeWidth={3} /><Feather size={8} strokeWidth={3} /><Disc $bg="#138f8e" /><Airplay size={8} /><History size={8} /><Crosshair size={7} /><Wifi size={9} strokeWidth={3} /><Volume1 size={8} color="#7c83b8" />
          <MenuGroup $gap={2}><MenuItem $small>100 %</MenuItem><BatteryCharging size={10} strokeWidth={3} /></MenuGroup>
          <MenuItem>Sáb 19:40</MenuItem><MenuItem>daniel trim</MenuItem><Search size={8} /><Disc $bg="linear-gradient(135deg, #1b1b3c, #6a3fb0)" /><List size={9} strokeWidth={3} />
        </MenuGroup>
      </MenuBar>
      <TitleBar>
        <Lights><Light $bg="#ee4b4b" aria-label="Cerrar" /><Light $bg="#f5b63b" aria-label="Minimizar" /><Light $bg="#2fc641" aria-label="Ampliar" /></Lights>
        <Title>Mastering go 12 masterin  [New King 9 go]</Title>
      </TitleBar>

      <Transport>
        <TGroup $pad={1}>
          <TBox $w={18}>Link</TBox><TBox $w={13}>Tap</TBox><Field $w={20} $h={9} aria-label="Tempo" defaultValue="120.00" />
          <TBox $w={18} aria-label="Metrónomo"><Svg w={16} h={5} v="0 0 16 5" sw={1} color="#ccc"><path d="M1.5 0v5M4.5 0v5M6.5 0v5M9.500 0v5M12.500 0v5M14.500 0v5" /></Svg></TBox>
          <Field $w={20} $h={9} aria-label="Compás" defaultValue="4 / 4" /><Field $w={18} $h={9} aria-label="Groove" defaultValue="100%" /><TBox $w={18}>○●  ▾</TBox><Select $w={21} $h={9} $pad={1} value="1 Bar" />
        </TGroup>
        <TGroup>
          <TBox $w={10}>−●−</TBox><Field $w={41} $h={9} aria-label="Posición" defaultValue="167 .  1 .  1" />
          <TGroup $pad={6}><TBox $w={10} $bg="none" aria-label="Reproducir"><Tri color="#1be26c" s={8} /></TBox><TBox $w={8} $bg="#fff" aria-label="Detener" /></TGroup>
          <TGroup $pad={2}><Disc as="button" $bg="#fff" aria-label="Grabar" /></TGroup>
          <TGroup $pad={6}><TBox $w={9} $bg="#f69a34" $fg="#222">+</TBox><TBox $w={8} $bg="#f69a34" aria-label="Automatización"><Svg color="#222" sw={3}><path d="M5 17L19 4" /></Svg></TBox><TBox $w={8} $bg="#ff7b52" $fg="#222">+</TBox><TBox $w={8} $fg="#888">⸬</TBox><TBox $w={8}>○</TBox></TGroup>
          <TGroup $pad={8}><Field $w={40} $h={9} aria-label="Inicio" defaultValue="137 .  1 .  1" /><TBox $w={9} aria-label="Punch in"><Svg color="#ddd" sw={3}><path d="M2 5h6l8 10h6" /></Svg></TBox><TBox $w={11} $bg="#f69a34" aria-label="Loop"><Svg color="#222" sw={3}><path d="M8 16H4V5h16v11h-7" /></Svg></TBox><TBox $w={9} aria-label="Punch out"><Svg color="#ddd" sw={3}><path d="M2 15h6l8-10h6" /></Svg></TBox><Field $w={41} $h={9} aria-label="Duración" defaultValue="40 .  0 .  0" /></TGroup>
        </TGroup>
        <TGroup><TBox $w={9} aria-label="Dibujar"><Pencil size={6} fill="#eee" /></TBox><TBox $w={8} aria-label="Teclado"><Piano size={7} /></TBox><TBox $w={13}>Key</TBox><TBox $w={3} /><TBox $w={14}>MIDI</TBox><Field $w={19} $h={9} $fill={60} $tone="#f69a34" aria-label="Carga" defaultValue="13 %" /><TBox $w={8}>▾</TBox><TBox $w={14} $bg="#ff7b52" $fg="#ffe0d2">CPU</TBox><TBox $w={3} /></TGroup>
      </Transport>

      <Main>
        <Left>
          <Browser>
            <SearchRow><PlayDot aria-label="Preescuchar"><Tri color="#4a4a4a" /></PlayDot><SearchInput type="search" aria-label="Buscar" placeholder="Buscar (Cmd + F)" /></SearchRow>
            <BrowserBody>
              <Side>
                <SideList>{side.map((s, i) => <SideItem key={i} $on={s?.on} $head={s?.head}>{s && <button>{s.s && <Swatch $bg={s.s} />}{s.i && <Ico n={s.i} />}{s.t}</button>}</SideItem>)}</SideList>
                <Thumb $top={7} $h={113} />
              </Side>
              <Files>
                <FilesHead><span>Nombre</span><span>▿</span></FilesHead>
                <FileList>{files.map(([t, d, ic, open], i) => (
                  <FileItem key={i} $on={i === 26}><button><Tri color={i === 26 ? '#1d2b2e' : open ? '#8d8d8d' : 'transparent'} /><Ico n={ic} /><Name>{t}</Name><Dots>{d.map((x, k) => <Dot key={k} $bg={x} />)}</Dots></button></FileItem>
                ))}</FileList>
                <Thumb $top={27} $h={77} />
              </Files>
            </BrowserBody>
            <BrowserFoot><Round $bg="#1d4a86" aria-label="Información"><Svg w={4} h={4} color="#6fa8e8" sw={4}><path d="M12 20V3M5 10l7-7 7 7" /></Svg></Round></BrowserFoot>
            <Pointer><svg width="28" height="30" viewBox="0 0 28 30" aria-hidden="true"><circle cx="14" cy="14" r="13" fill="none" stroke="#ab1c30" strokeWidth="2" /><path d="M14 13v7l2-1 1 3 1-1-1-3h2z" fill="#111" stroke="#ddd" strokeWidth=".6" /></svg></Pointer>
          </Browser>
          <Groove>
            <GrooveTable>
              <colgroup><col /><col width="27" /><col width="26" /><col width="26" /><col width="26" /><col width="32" /></colgroup>
              <thead><tr>{['Nombre del Groove', 'Base', 'Cuanti...', 'Tempo...', 'Aleatorio', 'Veloci...'].map(t => <th key={t}>{t}</th>)}</tr></thead>
              <tbody><tr><td><GrooveName><Name>Swing 16ths 57</Name><Save /><Swap /></GrooveName></td><td><Select value="1/16" /></td><td>0 %</td><td><Field aria-label="Temporización" defaultValue="100 %" $bg={c.teal} /></td><td>0 %</td><td>0 %</td></tr></tbody>
            </GrooveTable>
            <GrooveDrop>Suelte Clips o Grooves aquí<Thumb $top={1} $h={46} /></GrooveDrop>
            <GrooveFoot><GrooveTab aria-label="Groove Pool"><Svg color="#e2953a" sw={3}>{paths.grooves}</Svg></GrooveTab><h2>Groove Pool</h2>Cantidad Global<Field $w={17} aria-label="Cantidad Global" defaultValue="100%" $fill={84} /></GrooveFoot>
          </Groove>
        </Left>

        <Arrange>
          <OverviewRow>
            <Overview><OverviewMap /></Overview>
            <TopTools><Mini $w={8}>H</Mini><Mini $w={8}>W</Mini><ViewToggles><Menu size={7} color={c.orange} strokeWidth={3} /><PanelBottom size={7} color="#555" strokeWidth={3} /></ViewToggles></TopTools>
          </OverviewRow>
          <Body>
            <Timeline>
              <Ruler $step={21} $h={13} $pad={2}><Time items={range(23).map(i => (i < 22 ? 1 + i * 16 : ''))} /></Ruler>
              <Scrub><Loop /></Scrub>
              <Lane $h={2} />
              <Lane $h={65}><LaneA /></Lane>
              <Lane $h={36} $on><LaneB /></Lane>
              <Lane $h={60}><LaneC /></Lane>
              <Lane $h={11}><Clip $l={33} $w={60}>lead 3</Clip><Clip $l={162} $w={62}>P lead 2</Clip></Lane>
              <Lane $h={10} /><Lane $h={10} /><Lane $h={10} />
              <Lane><Zoom>6/1</Zoom></Lane>
              <Ruler $step={79} $h={11} $pad={1} $at="flex-start"><Time items={['0:00', '2:00', '4:00', '6:00', '8:00', '10:00']} /></Ruler>
              <Line $l={179} $t={13} $b={11} $c="#cfd8d8" /><Line $l={218} $t={29} $b={11} $c="#e8dfe8" /><Line $l={231} $t={13} $b={11} $c="#c8c8c8" />
            </Timeline>
            <Controls>
              <SetBox><SetRow><Mini $w={14} $r={3} $bg="#777">Set</Mini></SetRow>
                <SetRow><Round $bg="#bbb" aria-label="Anterior" /><Round $bg="#bbb" aria-label="Siguiente" /><Mini $w={10} aria-label="Automatización"><Wrench /></Mini><Mini $w={11} $bg="#ff8550" aria-label="Bloquear"><Lock size={5} color="#222" strokeWidth={4} /></Mini></SetRow></SetBox>
              <Track h={65} group bg={c.tan} up={4} io={<IOFull />} mix={<><VolPan v="-12.0" fill={45} /><Inf /></>} meter={40} tone="#777" />
              <Track h={36} on group bg={c.tan} name="24 Arp Legen" io={<IOFull />} mix={<><NumRow n="24" solo /><VolPan v="-19.0" fill={35} /><Inf first="-49.0" fill={20} /></>} meter={14} />
              <Track h={60} group bg={c.magenta} name="25 chord s" io={<IOFull ins />} mix={<><NumRow n="25" /><VolPan v="-13.1" fill={50} /><Inf first="-10.2" fill={60} /></>} meter={26} tone="#555" />
              <Track h={11} group bg="#8e7355" name="lead" io={<Select value="All Ins" />} mix={<NumRow n="26" arm />} />
              <Track h={10} bg="#9ccaf5" name="A ValhallaRoom |" io={<Select label="Salida A" $empty $bare />} mix={<Return k="A" />} meter={3} />
              <Track h={10} bg="#12a594" name="B ValhallaRoom |" io={<Select label="Salida B" $empty $bare />} mix={<Return k="B" />} />
              <Track h={10} bg="#0dfaa0" name="C Delay" io={<Select label="Salida C" $empty $bare />} mix={<Return k="C" />} />
              <Track bg="#ffa83a" name="Master" io={<><Select value="1/2" $pad={5} /><Select value="1/2" label="Cue" $pad={5} /></>}
                mix={<><MixRow><Field aria-label="Tempo" defaultValue="0" $fill={80} /><Field aria-label="Volumen" defaultValue="-0.3" $fill={70} $tone="#5aa5ef" /></MixRow><MixRow><Spacer /><Field aria-label="Panorama" defaultValue="C" $w={23} /></MixRow></>} meter={37} />
            </Controls>
            <RightRail><Thumb as="i" $top={109} $h={43} />
              {['I', 'R', 'M'].map(t => <RailDot key={t} $bg="#e8923c">{t}</RailDot>)}<RailDot $bg="#666">D</RailDot>
            </RightRail>
          </Body>
        </Arrange>
      </Main>

      <Devices>
        <Arp />
        <Device $w={74} $gap={2}><PlugHead name="Legend" /><DeviceBody><PadDevice /></DeviceBody></Device>
        <Device $w={74}><PlugHead name="bx_stereo..." /><DeviceBody><PadDevice /></DeviceBody></Device>
        <Device $w={10} $gap={1}><DeviceHead /></Device>
        <LevelBar />
        <Envelope />
        <LevelBar />
        <Device $w={119}><PlugHead name="FF Pro-Q 3" /><DeviceBody><Sidechain input="No Input" gainFull={-20} /><Column $w={5} $rule /><PadDevice /></DeviceBody></Device>
        <LevelBar />
        <Device $w={118}><PlugHead name="Trackspacer" on noSave />
          <DeviceBody><Sidechain input="23-Bass Mono" second="Post FX" tone="#45a5c0" mute gainFull={-20} /><Column $w={5} $rule /><PadDevice><Row $gap={4} $p="0 2px"><Tri color="#ddd" /><Save />default preset</Row></PadDevice></DeviceBody></Device>
        <LevelBar />
        <DropZone>Deposite aquí los efectos de audio</DropZone>
      </Devices>

      <Status>
        <PlayDot aria-label="Ayuda"><Tri color="#4a4a4a" /></PlayDot><StatusBar $f={681} /><StatusBar $f={102} />24-Arp Legend
        <MiniMap>Arp-L<MapView>CV Enveloj</MapView></MiniMap>
      </Status>
    </App_>
  );
}
